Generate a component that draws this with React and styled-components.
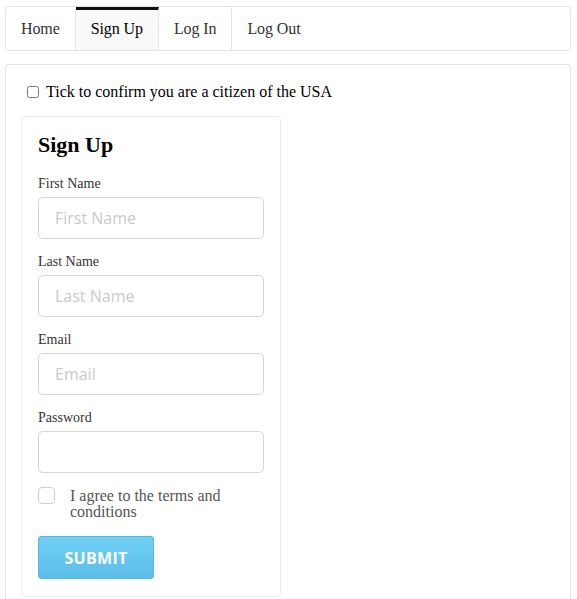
import React, { useState } from 'react'
import styled, { createGlobalStyle } from 'styled-components'

const Global = createGlobalStyle`
  body {
    margin: 0;
    background: #fff;
    font-family: "Liberation Serif", "Times New Roman", serif;
  }
`
const Page = styled.div`
  padding: 6px 6px 0 5px;
`
const Nav = styled.div`
  display: flex;
  height: 43px;
  border: 1px solid #e4e4e4;
  border-radius: 4px;
`
const Tab = styled.div`
  display: flex;
  align-items: center;
  padding: 0 15px 3px 15px;
  border-right: ${p => (p.last ? 'none' : '1px solid #e6e6e6')};
  border-top: 3px solid ${p => (p.active ? '#111' : 'transparent')};
  background: ${p => (p.active ? '#f9f9f9' : 'transparent')};
  font-size: 16px;
  letter-spacing: -0.1px;
  color: ${p => (p.active ? '#000' : '#333')};
  box-sizing: border-box;
  cursor: pointer;
`
const Main = styled.div`
  margin-top: 13px;
  border: 1px solid #e4e4e4;
  border-bottom: none;
  border-radius: 4px 4px 0 0;
  padding: 18px 15px 0 15px;
  height: 540px;
  box-sizing: border-box;
`
const CitizenRow = styled.label`
  display: flex;
  align-items: center;
  gap: 7px;
  padding-left: 6px;
  font-size: 16px;
  color: #000;
  input {
    margin: 0;
    width: 12px;
    height: 12px;
  }
`
const Card = styled.form`
  margin-top: 15px;
  width: 260px;
  box-sizing: border-box;
  border: 1px solid #ebebeb;
  border-radius: 5px;
  padding: 16px 16px 17px 16px;
`
const Heading = styled.h2`
  margin: 0 0 18px;
  font-size: 22px;
  line-height: 24px;
  font-weight: bold;
  color: #000;
`
const Field = styled.div`
  display: flex;
  flex-direction: column;
  gap: 4px;
  margin-bottom: 14px;
`
const Label = styled.label`
  font-size: 14px;
  line-height: 18px;
  color: #333;
`
const Input = styled.input`
  height: 42px;
  box-sizing: border-box;
  border: 1px solid #d6d6d6;
  border-radius: 5px;
  padding: 0 16px;
  font-family: "Open Sans", sans-serif;
  font-size: 16px;
  color: #333;
  outline: none;
  &::placeholder {
    color: #cacaca;
  }
`
const AgreeRow = styled.label`
  display: flex;
  align-items: flex-start;
  gap: 15px;
  margin-top: 4px;
  font-size: 16px;
  line-height: 16px;
  color: #555;
  span:last-child {
    padding-top: 1px;
  }
`
const Box = styled.span`
  flex: none;
  width: 17px;
  height: 17px;
  box-sizing: border-box;
  border: 1px solid #cfcfcf;
  border-radius: 4px;
  background: ${p => (p.checked ? '#68c7ee' : '#fff')};
`
const Submit = styled.button`
  margin-top: 16px;
  width: 116px;
  height: 43px;
  border: 1px solid #58b7e2;
  border-radius: 3px;
  background: linear-gradient(#6fcff5, #5cbde9);
  color: #fff;
  font-family: "Open Sans", sans-serif;
  font-weight: 700;
  font-size: 16px;
  letter-spacing: 0.3px;
  cursor: pointer;
`

const tabs = ['Home', 'Sign Up', 'Log In', 'Log Out']
const fields = [
  { label: 'First Name', placeholder: 'First Name' },
  { label: 'Last Name', placeholder: 'Last Name' },
  { label: 'Email', placeholder: 'Email' },
  { label: 'Password', placeholder: '', type: 'password' },
]

export default function App() {
  const [agree, setAgree] = useState(false)
  return (
    <Page>
      <Global />
      <Nav>
        {tabs.map((t, i) => (
          <Tab key={t} active={t === 'Sign Up'} last={i === tabs.length - 1}>{t}</Tab>
        ))}
      </Nav>
      <Main>
        <CitizenRow>
          <input type="checkbox" />
          Tick to confirm you are a citizen of the USA
        </CitizenRow>
        <Card onSubmit={e => e.preventDefault()}>
          <Heading>Sign Up</Heading>
          {fields.map(f => (
            <Field key={f.label}>
              <Label>{f.label}</Label>
              <Input type={f.type || 'text'} placeholder={f.placeholder} />
            </Field>
          ))}
          <AgreeRow onClick={() => setAgree(!agree)}>
            <Box checked={agree} />
            <span>I agree to the terms and conditions</span>
          </AgreeRow>
          <Submit type="submit">SUBMIT</Submit>
        </Card>
      </Main>
    </Page>
  )
}
